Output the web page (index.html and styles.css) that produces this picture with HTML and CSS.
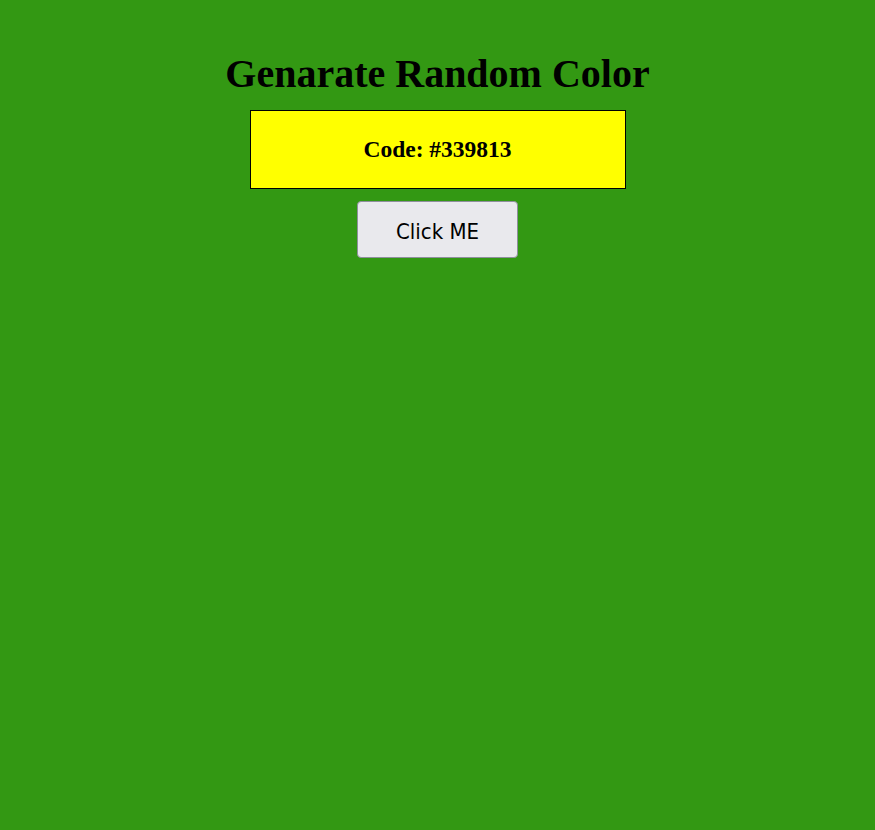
FILE: index.html
```html
<!DOCTYPE html>
<html>
<head>
<meta charset="utf-8">
<link rel="stylesheet" href="styles.css">
</head>
<body>
<div class="page">
  <h1 class="title">Genarate Random Color</h1>
  <div class="code-box"><span class="code-text">Code: #339813</span></div>
  <button class="btn">Click ME</button>
</div>
</body>
</html>
```
FILE: styles.css
```css
html, body {
  margin: 0;
  padding: 0;
  background: #339813;
}
.page {
  display: flex;
  flex-direction: column;
  align-items: center;
  padding-top: 51px;
  font-family: "Liberation Serif", "Times New Roman", serif;
}
.title {
  margin: 0 0 13px 0;
  font-size: 40px;
  font-weight: bold;
  line-height: 46px;
  color: #000;
}
.code-box {
  box-sizing: border-box;
  width: 376px;
  height: 79px;
  background: #ffff00;
  border: 1px solid #000;
  display: flex;
  align-items: center;
  justify-content: center;
}
.code-text {
  font-size: 23.5px;
  font-weight: bold;
  color: #000;
}
.btn {
  margin-top: 12px;
  box-sizing: border-box;
  width: 161px;
  height: 57px;
  background: #e9e9ed;
  border: 1px solid #8f8f9d;
  border-radius: 4px;
  font-family: "DejaVu Sans Condensed", "DejaVu Sans", sans-serif;
  font-size: 22px;
  color: #000;
  padding: 3px 0 0 0;
}
```
